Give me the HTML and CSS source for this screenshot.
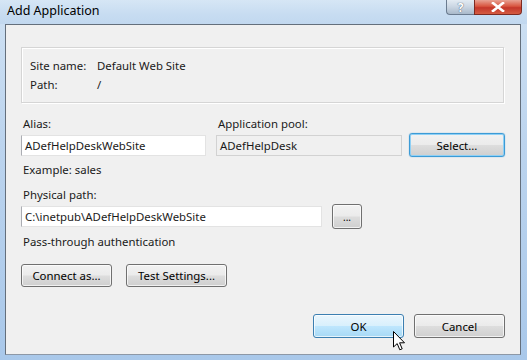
FILE: index.html
```html
<!DOCTYPE html>
<html lang="en">
    <head>
        <meta charset="UTF-8" />
        <title>Add Application</title>
        <link rel="stylesheet" href="styles.css">
    </head>
    <body>
        <div class="window">
            <div class="titlebar">
                <span class="title">Add Application</span>
                <div class="caption-buttons">
                    <div class="cap-btn help">?</div>
                    <div class="cap-btn close">
                        <svg width="14" height="10" viewBox="0 0 14 10">
                            <path d="M2 1 L12 9 M12 1 L2 9" stroke="#fff" stroke-width="2.6" stroke-linecap="square" />
                        </svg>
                    </div>
                </div>
            </div>

            <div class="client">
                <div class="info-box">
                    <div class="info-row">
                        <span class="info-label">Site name:</span>
                        <span>Default Web Site</span>
                    </div>
                    <div class="info-row">
                        <span class="info-label">Path:</span>
                        <span>/</span>
                    </div>
                </div>

                <div class="app-grid">
                    <label class="field-label">Alias:</label>
                    <label class="field-label">Application pool:</label>
                    <span></span>
                    <div class="textbox">ADefHelpDeskWebSite</div>
                    <div class="textbox readonly">ADefHelpDesk</div>
                    <button class="btn focused">Select...</button>
                </div>
                <p class="hint">Example: sales</p>

                <label class="field-label path-label">Physical path:</label>
                <div class="path-row">
                    <div class="textbox path-box">C:\inetpub\ADefHelpDeskWebSite</div>
                    <button class="btn browse">...</button>
                </div>
                <p class="hint">Pass-through authentication</p>

                <div class="auth-row">
                    <button class="btn connect">Connect as...</button>
                    <button class="btn test">Test Settings...</button>
                </div>

                <div class="footer">
                    <button class="btn hot">OK</button>
                    <button class="btn">Cancel</button>
                </div>
            </div>

            <!-- mouse pointer over OK -->
            <svg class="cursor" width="13" height="20" viewBox="0 0 13 20">
                <path d="M0.5 0.5 L0.5 16 L4.2 12.6 L6.8 18.8 L9.2 17.8 L6.6 11.8 L11.5 11.8 Z" fill="#fff" stroke="#000" stroke-width="1" stroke-linejoin="miter" />
            </svg>
        </div>
    </body>
</html>
```

FILE: styles.css
```css
body {
    margin: 0;
    font-family: "Noto Sans", "Open Sans", sans-serif;
    font-size: 11.4px;
    color: #1a1a1a;
    background-color: #fff;
}
.window {
    position: relative;
    width: 527px;
    height: 360px;
    overflow: hidden;
    background: linear-gradient(180deg, #cfe1f3 0%, #bcd4ee 40%, #a9c8ea 100%);
}
.titlebar {
    height: 24px;
    display: flex;
    justify-content: space-between;
    align-items: flex-start;
    background: linear-gradient(180deg, #d6e6f5 0%, #c7dcf1 60%, #c2d8ef 100%);
}
.title {
    padding: 2px 0 0 7px;
    font-size: 12.5px;
    color: #000;
}
.caption-buttons {
    display: flex;
    margin-right: 5px;
}
.cap-btn {
    height: 14px;
    display: flex;
    align-items: center;
    justify-content: center;
    border: 1px solid #6a7b8f;
    border-top: none;
}
.help {
    width: 27px;
    border-radius: 0 0 0 4px;
    border-right: none;
    background: linear-gradient(180deg, #e3ebf3 0%, #c9d5e2 50%, #a9b9ca 100%);
    color: #fff;
    font-weight: bold;
    font-size: 12px;
    text-shadow: 0 0 1px #56667a, 0 0 1px #56667a;
}
.close {
    width: 46px;
    border-radius: 0 0 4px 0;
    border-color: #7d2a21;
    background: linear-gradient(180deg, #e8a293 0%, #d8553f 45%, #c4372a 55%, #d45c42 100%);
}
.client {
    margin: 0 6px 0 5px;
    height: 307px;
    padding: 22px 16px 0 15px;
    background-color: #f0f0f0;
    border: 1px solid #646f7c;
    border-bottom-color: #8d98a6;
}
.info-box {
    height: 40px;
    padding: 8px 8px 6px 8px;
    border: 1px solid #d5d5d5;
    box-shadow: inset 1px 1px 0 #fff, 1px 1px 0 #fff;
}
.info-row {
    display: flex;
    height: 19px;
    line-height: 19px;
}
.info-label {
    width: 67px;
}
.app-grid {
    display: grid;
    grid-template-columns: 185px 186px 96px;
    column-gap: 10px;
    align-items: center;
    margin-top: 13px;
}
.app-grid .btn {
    margin-left: -3px;
    height: 24px;
    width: 96px;
}
.field-label {
    display: block;
    line-height: 15px;
    height: 15px;
    padding-left: 2px;
    margin-bottom: 2px;
}
.textbox {
    box-sizing: border-box;
    height: 21px;
    line-height: 19px;
    padding: 0 3px;
    background-color: #fff;
    border: 1px solid #abadb3;
    border-top-color: #e3e3e3;
    border-right-color: #e3e3e3;
    border-bottom-color: #e3e3e3;
    white-space: nowrap;
}
.textbox.readonly {
    background-color: #f0f0f0;
    border-color: #d2d2d2;
}
.hint {
    margin: 0;
    padding-left: 2px;
    line-height: 15px;
    margin-top: 5px;
}
.path-label {
    margin-top: 10px;
}
.path-row {
    display: flex;
    align-items: center;
    gap: 10px;
}
.path-box {
    width: 301px;
}
.btn {
    box-sizing: border-box;
    font-family: inherit;
    font-size: 11.4px;
    color: #000;
    height: 23px;
    padding: 0;
    border: 1px solid #707070;
    border-radius: 3px;
    background: linear-gradient(180deg, #f2f2f2 0%, #ebebeb 48%, #dddddd 52%, #cfcfcf 100%);
    box-shadow: inset 0 0 0 1px rgba(255, 255, 255, 0.7);
}
.btn.browse {
    width: 30px;
    height: 25px;
    font-size: 10px;
}
.btn.focused {
    border-color: #3c9bd6;
    box-shadow: inset 0 0 0 1px #8fd0f5, 0 0 1px #3c9bd6;
}
.btn.hot {
    border-color: #3c7fb1;
    background: linear-gradient(180deg, #eaf6fd 0%, #d9f0fc 48%, #bee6fd 52%, #a7d9f5 100%);
}
.auth-row {
    display: flex;
    gap: 14px;
    margin-top: 15px;
}
.auth-row .connect {
    width: 91px;
}
.auth-row .test {
    width: 101px;
}
.footer {
    display: flex;
    justify-content: flex-end;
    gap: 10px;
    margin-top: 27px;
    margin-right: -1px;
}
.footer .btn {
    width: 91px;
    height: 24px;
}
.cursor {
    position: absolute;
    left: 393px;
    top: 331px;
}
```
